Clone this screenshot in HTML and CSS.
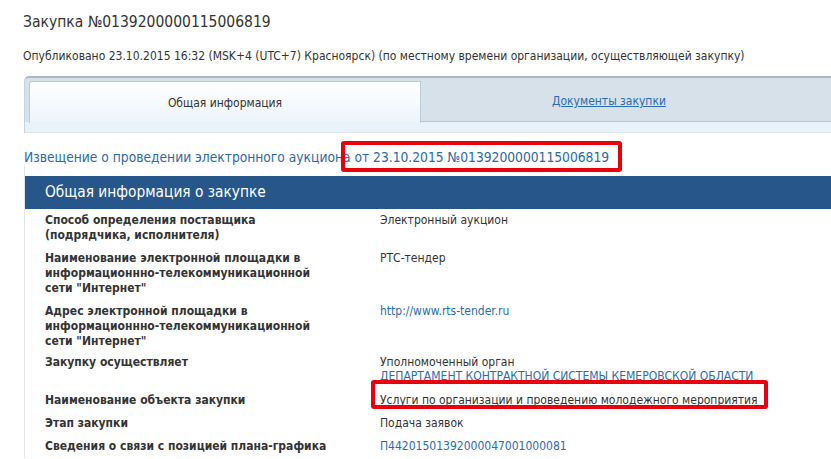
FILE: index.html
```html
<!DOCTYPE html>
<html lang="ru">
<head>
<meta charset="utf-8">
<title>Закупка №0139200000115006819</title>
<link rel="stylesheet" href="styles.css">
</head>
<body>
<div class="page">
  <h1 class="title">Закупка №0139200000115006819</h1>
  <p class="published">Опубликовано 23.10.2015 16:32 (MSK+4 (UTC+7) Красноярск) (по местному времени организации, осуществляющей закупку)</p>

  <div class="tabs">
    <div class="tab-row">
      <div class="tab tab-active">Общая информация</div>
      <div class="tab"><a href="#" class="tab-link">Документы закупки</a></div>
      <div class="tab-rest"></div>
    </div>
    <div class="tab-strip"></div>
  </div>

  <a href="#" class="notice-title">Извещение о проведении электронного аукциона от 23.10.2015 №0139200000115006819</a>

  <div class="panel">
    <div class="panel-head">Общая информация о закупке</div>
    <div class="rows">
      <div class="row">
        <div class="label">Способ определения поставщика<br>(подрядчика, исполнителя)</div>
        <div class="value">Электронный аукцион</div>
      </div>
      <div class="row">
        <div class="label">Наименование электронной площадки в<br>информационнно-телекоммуникационной<br>сети "Интернет"</div>
        <div class="value">РТС-тендер</div>
      </div>
      <div class="row">
        <div class="label">Адрес электронной площадки в<br>информационнно-телекоммуникационной<br>сети "Интернет"</div>
        <div class="value"><a href="#" class="link">http://www.rts-tender.ru</a></div>
      </div>
      <div class="row row-short">
        <div class="label">Закупку осуществляет</div>
        <div class="value value-tight">Уполномоченный орган<br><a href="#" class="link link-under">ДЕПАРТАМЕНТ КОНТРАКТНОЙ СИСТЕМЫ КЕМЕРОВСКОЙ ОБЛАСТИ</a></div>
      </div>
      <div class="row">
        <div class="label">Наименование объекта закупки</div>
        <div class="value">Услуги по организации и проведению молодежного мероприятия</div>
      </div>
      <div class="row">
        <div class="label">Этап закупки</div>
        <div class="value">Подача заявок</div>
      </div>
      <div class="row">
        <div class="label">Сведения о связи с позицией плана-графика</div>
        <div class="value"><a href="#" class="link">П44201501392000047001000081</a></div>
      </div>
    </div>
  </div>
</div>

<div class="mark mark-notice"></div>
<div class="mark mark-object"></div>
</body>
</html>
```

FILE: styles.css
```css
html, body {
  margin: 0;
  padding: 0;
  background: #ffffff;
}

body {
  font-family: "DejaVu Sans", Verdana, sans-serif;
  font-stretch: condensed;
  color: #333333;
  overflow: hidden;
  width: 831px;
  height: 459px;
  position: relative;
}

.page {
  padding: 12px 0 0 24px;
}

.title {
  margin: 0 0 0 -1px;
  font-size: 15.5px;
  line-height: 20px;
  font-weight: normal;
  color: #333333;
}

.published {
  margin: 17px 0 0 -1px;
  font-size: 12px;
  line-height: 14px;
  color: #333333;
  white-space: nowrap;
}

.tabs {
  margin-top: 13px;
  border-top: 2px solid #a9b9c8;
  border-left: 1px solid #c7d3de;
  border-top-left-radius: 5px;
  background: #d6e1ea;
}

.tab-row {
  display: flex;
  padding: 3px 0 0 4px;
  height: 41px;
}

.tab {
  flex: 0 0 376px;
  display: flex;
  align-items: center;
  justify-content: center;
  font-size: 12px;
  border-bottom: 1px solid #b9c7d3;
}

.tab-rest {
  flex: 1;
  border-bottom: 1px solid #b9c7d3;
}

.tab-active {
  flex: 0 0 390px;
  border: 1px solid #bfcbd7;
  border-bottom: none;
  border-top-left-radius: 3px;
  background: linear-gradient(#ffffff, #ecf5fc);
  color: #333333;
  margin-bottom: -1px;
  padding-top: 1px;
}

.tab-link {
  color: #2a6cb3;
  text-decoration: underline;
}

.tab-strip {
  height: 10px;
  background: #e8f2fa;
  border-bottom: 1px solid #dfe7ee;
}

.notice-title {
  display: block;
  margin-top: 16px;
  font-size: 13.7px;
  line-height: 16px;
  color: #2a6aa8;
  text-decoration: none;
  white-space: nowrap;
}

.panel {
  border-left: 1px solid #e3e6e9;
  padding-top: 11px;
}

.panel-head {
  background: #27578a;
  color: #ffffff;
  font-size: 15.3px;
  line-height: 33px;
  height: 33px;
  padding-left: 20px;
}

.rows {
  display: flex;
  flex-direction: column;
}

.row {
  display: grid;
  grid-template-columns: 335px 1fr;
  padding: 4px 0 4px 20px;
  font-size: 12px;
  line-height: 15px;
}

.row-short {
  padding-top: 2px;
  padding-bottom: 6px;
}

.label {
  font-weight: bold;
  color: #333333;
}

.value {
  color: #333333;
  white-space: nowrap;
}

.value-tight {
  line-height: 14px;
}

.link {
  color: #2a6cb3;
  text-decoration: none;
}

.link-under {
  text-decoration: underline;
}

.mark {
  position: absolute;
  border: 4px solid #e8000c;
  border-radius: 3px;
  box-sizing: border-box;
}

.mark-notice {
  left: 341px;
  top: 141px;
  width: 281px;
  height: 31px;
}

.mark-object {
  left: 371px;
  top: 380px;
  width: 397px;
  height: 29px;
}
```
